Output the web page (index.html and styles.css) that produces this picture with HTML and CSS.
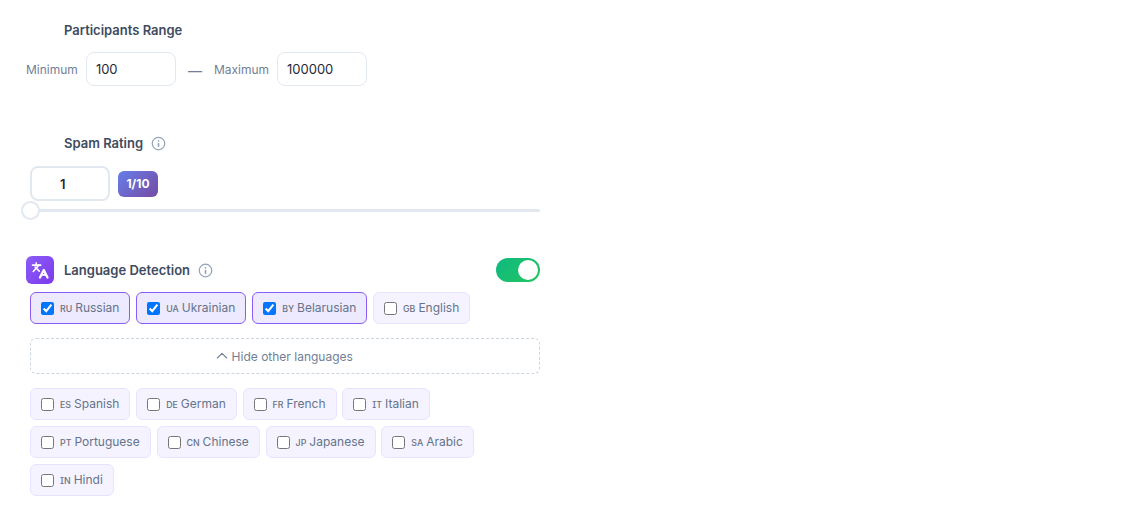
FILE: index.html
```html
<!DOCTYPE html>
<html lang="en">
<head>
<meta charset="utf-8">
<title>Filters</title>
<link rel="stylesheet" href="styles.css">
</head>
<body>
<main class="panel">
  <section class="range">
    <h3 class="title range-title">Participants Range</h3>
    <div class="range-row">
      <label class="range-label" for="min">Minimum</label>
      <input class="range-input" id="min" type="text" value="100">
      <span class="dash">—</span>
      <label class="range-label" for="max">Maximum</label>
      <input class="range-input" id="max" type="text" value="100000">
    </div>
  </section>

  <section class="spam">
    <div class="head spam-head">
      <h3 class="title">Spam Rating</h3>
      <svg class="info" viewBox="0 0 24 24" fill="none" stroke="currentColor" stroke-width="2" stroke-linecap="round"><circle cx="12" cy="12" r="10"/><path class="info-i" d="M12 16.5v-4.5M12 7.8h.01"/></svg>
    </div>
    <div class="spam-row">
      <input class="spam-input" type="text" value="1">
      <span class="badge">1/10</span>
    </div>
    <div class="slider"><span class="thumb"></span></div>
  </section>

  <section class="lang">
    <div class="lang-head">
      <span class="lang-icon">
        <svg viewBox="0 0 24 24" fill="none" stroke="#fff" stroke-width="2.1" stroke-linecap="round" stroke-linejoin="round"><path d="M2 5.5h11"/><path d="M7 2.5v3"/><path d="M10.5 5.5 3 14"/><path d="m5.5 8 5.5 5.5"/><path d="m22 22-5-10-5 10" stroke-width="3"/><path d="M14 18.5h6" stroke-width="2.6"/></svg>
      </span>
      <h3 class="title">Language Detection</h3>
      <svg class="info" viewBox="0 0 24 24" fill="none" stroke="currentColor" stroke-width="2" stroke-linecap="round"><circle cx="12" cy="12" r="10"/><path class="info-i" d="M12 16.5v-4.5M12 7.8h.01"/></svg>
      <span class="toggle"><span class="knob"></span></span>
    </div>
    <div class="chips">
      <label class="chip on"><input type="checkbox" checked><span><span class="code">RU</span>Russian</span></label>
      <label class="chip on"><input type="checkbox" checked><span><span class="code">UA</span>Ukrainian</span></label>
      <label class="chip on"><input type="checkbox" checked><span><span class="code">BY</span>Belarusian</span></label>
      <label class="chip"><input type="checkbox"><span><span class="code">GB</span>English</span></label>
    </div>
    <button class="more" type="button">
      <svg class="chev" viewBox="0 0 24 24" fill="none" stroke="currentColor" stroke-width="1.6" stroke-linecap="round" stroke-linejoin="round"><path d="m19 15-7-7-7 7"/></svg>
      Hide other languages
    </button>
    <div class="chips">
      <label class="chip"><input type="checkbox"><span><span class="code">ES</span>Spanish</span></label>
      <label class="chip"><input type="checkbox"><span><span class="code">DE</span>German</span></label>
      <label class="chip"><input type="checkbox"><span><span class="code">FR</span>French</span></label>
      <label class="chip"><input type="checkbox"><span><span class="code">IT</span>Italian</span></label>
      <label class="chip"><input type="checkbox"><span><span class="code">PT</span>Portuguese</span></label>
      <label class="chip"><input type="checkbox"><span><span class="code">CN</span>Chinese</span></label>
      <label class="chip"><input type="checkbox"><span><span class="code">JP</span>Japanese</span></label>
      <label class="chip"><input type="checkbox"><span><span class="code">SA</span>Arabic</span></label>
      <label class="chip"><input type="checkbox"><span><span class="code">IN</span>Hindi</span></label>
    </div>
  </section>
</main>
</body>
</html>
```
FILE: styles.css
```css
* { box-sizing: border-box; }
html, body { margin: 0; background: #fff; }
body { font-family: Inter, "Liberation Sans", sans-serif; color: #2d3748; }
.panel { width: 540px; padding: 22px 0 0 26px; }
.title { margin: 0; font-size: 13px; line-height: 16px; font-weight: 600; color: #404b5e; }
.range-title { padding-left: 38px; }
.range-row { display: flex; align-items: center; margin-top: 14px; }
.range-label { font-size: 12px; color: #718096; }
.range-input { width: 90px; height: 34px; margin-left: 8px; padding: 0 12px 0 9px; border: 1px solid #e2e8f0; border-radius: 8px; font: 13px Inter, sans-serif; color: #1f2937; outline: none; }
.dash { width: 38px; text-align: center; font-size: 14px; color: #718096; padding-top: 2px; }
.spam { margin-top: 49px; }
.head { display: flex; align-items: center; gap: 8px; }
.spam-head { padding-left: 38px; }
.info { width: 15px; height: 15px; color: #94a3b8; flex: none; }
.info-i { stroke-width: 2.6; }
.spam-row { display: flex; align-items: center; gap: 8px; margin: 15px 0 0 4px; }
.spam-input { width: 80px; height: 35px; border: 2px solid #e2e8f0; border-radius: 8px; text-align: left; font: 600 13px Inter, sans-serif; color: #1f2937; outline: none; padding: 0 0 0 28px; }
.badge { width: 40px; height: 26px; display: flex; align-items: center; justify-content: center; border-radius: 6px; background: linear-gradient(135deg, #667eea, #764ba2); color: #fff; font-size: 12px; font-weight: 700; }
.slider { position: relative; height: 3px; margin: 8px 0 0 4px; background: #e2e8f0; border-radius: 2px; }
.thumb { position: absolute; left: -9px; top: -8px; width: 19px; height: 19px; border-radius: 50%; background: #fff; border: 2px solid #e2e8f0; }
.lang { margin-top: 44px; }
.lang-head { display: flex; align-items: center; height: 28px; }
.lang-icon { width: 28px; height: 28px; border-radius: 6px; display: flex; align-items: center; justify-content: center; background: linear-gradient(135deg, #8b5cf6, #7c3aed); margin-right: 10px; }
.lang-icon svg { width: 18px; height: 18px; }
.lang-head .info { margin-left: 8px; }
.toggle { margin-left: auto; width: 44px; height: 24px; border-radius: 12px; background: linear-gradient(135deg, #10b981, #22c55e); display: flex; align-items: center; justify-content: flex-end; padding-right: 2px; }
.knob { width: 20px; height: 20px; border-radius: 50%; background: #fff; }
.chips { display: flex; flex-wrap: wrap; gap: 6px 5.8px; margin-left: 4px; }
.lang-head + .chips { margin-top: 8px; }
.chip { height: 32px; display: flex; align-items: center; padding: 0 10px; background: #f5f3ff; border: 1px solid #e9e3ff; border-radius: 6px; font-size: 12px; line-height: 14px; color: #64748b; }
.chip input { margin: 0 6px 0 0; width: 13px; height: 13px; }
.code { font-size: 8.8px; font-weight: 500; margin-right: 3px; color: #6b7280; font-feature-settings: "cv08"; }
.chip.on { background: #ede9fe; border-color: #8b5cf6; }
.more { display: flex; width: 510px; height: 36px; margin: 14px 0 14px 4px; align-items: center; justify-content: center; gap: 2px; background: #fff; border: 1px dashed #cbd5e1; border-radius: 6px; font: 12px Inter, sans-serif; color: #718096; padding: 0 3.5px 0 0; }
.chev { width: 16px; height: 16px; }
```
